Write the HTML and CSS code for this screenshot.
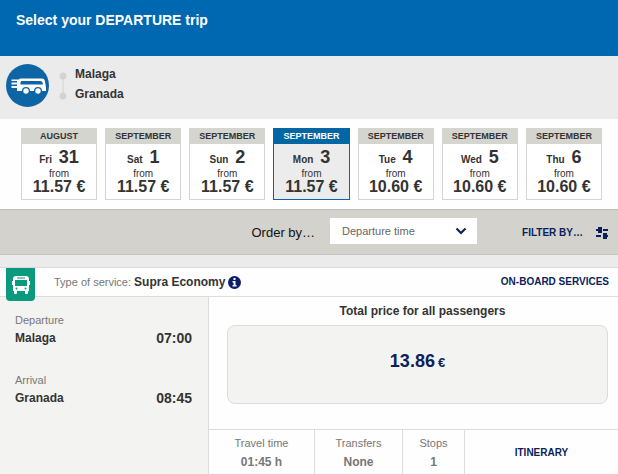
FILE: index.html
```html
<!DOCTYPE html>
<html lang="en">
<head>
    <meta charset="UTF-8">
    <meta name="viewport" content="width=device-width, initial-scale=1.0">
    <title>Select your departure trip</title>
    <link rel="stylesheet" href="styles.css">
</head>
<body>

    <header class="page-header">
        <h1>Select your DEPARTURE trip</h1>
    </header>

    <!-- Origin and destination -->
    <section class="route">
        <svg class="route-logo" viewBox="0 0 43 43" aria-hidden="true">
            <circle cx="21.500" cy="21.500" r="21.500" fill="#0d65a5"/>
            <path d="M15 14.500H36q2.500 0 3 3l1 6v3.500h-4a4 4 0 0 0-8 0h-4a4 4 0 0 0-8 0H11v-3H5.500v-2H11v-1.500H5.500v-2H11v-1.500H5.500v-1.500H13q0-1 2-1z" fill="#fff"/>
            <path d="M15.500 17h19q1.500 0 2 1.500l.5 2H14.500V18z" fill="#0d65a5"/>
            <circle cx="20" cy="27" r="2.700" fill="#fff"/>
            <circle cx="32" cy="27" r="2.700" fill="#fff"/>
        </svg>
        <svg class="route-line" viewBox="0 0 8 30" aria-hidden="true">
            <path d="M4 4v22" stroke="#d3d3d3" stroke-width="1"/>
            <circle cx="4" cy="5" r="3.500" fill="#d3d3d3"/>
            <circle cx="4" cy="25" r="3.500" fill="#d3d3d3"/>
        </svg>
        <div class="route-cities">
            <span>Malaga</span>
            <span>Granada</span>
        </div>
    </section>

    <!-- Days -->
    <nav class="days">
        <button class="day"><span class="month">AUGUST</span><span class="date">Fri <b>31</b></span><span class="from">from</span><span class="fare">11.57 €</span></button>
        <button class="day"><span class="month">SEPTEMBER</span><span class="date">Sat <b>1</b></span><span class="from">from</span><span class="fare">11.57 €</span></button>
        <button class="day"><span class="month">SEPTEMBER</span><span class="date">Sun <b>2</b></span><span class="from">from</span><span class="fare">11.57 €</span></button>
        <button class="day active"><span class="month">SEPTEMBER</span><span class="date">Mon <b>3</b></span><span class="from">from</span><span class="fare">11.57 €</span></button>
        <button class="day"><span class="month">SEPTEMBER</span><span class="date">Tue <b>4</b></span><span class="from">from</span><span class="fare">10.60 €</span></button>
        <button class="day"><span class="month">SEPTEMBER</span><span class="date">Wed <b>5</b></span><span class="from">from</span><span class="fare">10.60 €</span></button>
        <button class="day"><span class="month">SEPTEMBER</span><span class="date">Thu <b>6</b></span><span class="from">from</span><span class="fare">10.60 €</span></button>
    </nav>

    <!-- Order and filter -->
    <div class="toolbar">
        <label for="order">Order by…</label>
        <div class="select-box">
            <select id="order">
                <option>Departure time</option>
                <option>Arrival time</option>
                <option>Price</option>
            </select>
            <svg class="chevron" viewBox="0 0 12 8" aria-hidden="true">
                <path d="M1.500 1.500L6 6l4.500-4.500" fill="none" stroke="#14234f" stroke-width="2.200"/>
            </svg>
        </div>
        <button class="filter">
            FILTER BY…
            <svg viewBox="0 0 14 14" aria-hidden="true">
                <path d="M1 4h6M8 4h5M1 10h5M8 10h5" stroke="#0b1f5c" stroke-width="2"/>
                <path d="M3 1h4v6H3zM8 7h4v6H8z" fill="#0b1f5c"/>
            </svg>
        </button>
    </div>

    <!-- Result -->
    <article class="trip">
        <div class="trip-head">
            <span class="bus-badge">
                <svg viewBox="0 0 18 18" aria-hidden="true">
                    <path d="M4 0h10q3 0 3 3v2h1v4h-1v6h-1v2q0 1-1 1h-1q-1 0-1-1v-2H5v2q0 1-1 1H3q-1 0-1-1v-2H1V9H0V5h1V3q0-3 3-3z" fill="#fff"/>
                    <path d="M5 1.500h8v1H5zM3 4h12v6H3z" fill="#0c9a7f"/>
                    <circle cx="4.500" cy="12.500" r="1" fill="#0c9a7f"/>
                    <circle cx="13.500" cy="12.500" r="1" fill="#0c9a7f"/>
                </svg>
            </span>
            <p class="service">Type of service: <b>Supra Economy</b></p>
            <button class="info" aria-label="Service information">
                <svg viewBox="0 0 13 13" aria-hidden="true">
                    <circle cx="6.500" cy="6.500" r="6.500" fill="#0b1f6b"/>
                    <path d="M5.500 2h2v2h-2zM4.500 5h3v4h1v1.500h-4V9h1V6.500h-1z" fill="#fff"/>
                </svg>
            </button>
            <a class="onboard" href="#services">ON-BOARD SERVICES</a>
        </div>

        <div class="trip-body">
            <div class="times">
                <div class="stop">
                    <span class="stop-label">Departure</span>
                    <span class="stop-city">Malaga</span>
                    <time>07:00</time>
                </div>
                <div class="stop">
                    <span class="stop-label">Arrival</span>
                    <span class="stop-city">Granada</span>
                    <time>08:45</time>
                </div>
            </div>

            <div class="details">
                <div class="price">
                    <h2>Total price for all passengers</h2>
                    <button class="price-box"><b>13.86</b><span>€</span></button>
                </div>
                <div class="facts">
                    <div class="fact"><span>Travel time</span><b>01:45 h</b></div>
                    <div class="fact"><span>Transfers</span><b>None</b></div>
                    <div class="fact"><span>Stops</span><b>1</b></div>
                    <a class="itinerary" href="#itinerary">ITINERARY</a>
                </div>
            </div>
        </div>
    </article>

</body>
</html>
```
FILE: styles.css
```css
* {
    box-sizing: border-box;
}

body {
    margin: 0;
    background-color: #ebebeb;
    color: #333;
    font-family: "Liberation Sans", Arial, sans-serif;
    font-size: 12px;
    line-height: 16px;
}

button {
    margin: 0;
    padding: 0;
    border: none;
    background: none;
    color: inherit;
    font: inherit;
    cursor: pointer;
}

svg {
    display: block;
}

/* Header */
.page-header {
    padding: 12px 16px 28px;
    background-color: #0067b1;
    color: #fff;
}

.page-header h1 {
    margin: 0;
    font-size: 14px;
    line-height: 16px;
}

/* Route */
.route {
    display: flex;
    align-items: center;
    padding: 8px 6px 12px;
}

.route-logo {
    width: 43px;
    height: 43px;
}

.route-line {
    width: 8px;
    height: 30px;
    margin: 0 8px 0 10px;
}

.route-cities {
    display: flex;
    flex-direction: column;
    gap: 4px;
    padding-bottom: 3px;
    font-size: 12px;
    font-weight: bold;
}

/* Days */
.days {
    display: grid;
    grid-template-columns: repeat(7, 1fr);
    gap: 8px;
    padding: 9px 16px 9px 21px;
    background-color: #fefefe;
}

.day {
    display: flex;
    flex-direction: column;
    align-items: stretch;
    padding-bottom: 4px;
    border: 1px solid #d5d5d0;
    background-color: #fff;
    text-align: center;
}

.month {
    background-color: #d5d5d0;
    font-size: 9px;
    font-weight: bold;
    line-height: 15px;
}

.date {
    padding-top: 4px;
    font-size: 10px;
    font-weight: bold;
    line-height: 18px;
}

.date b {
    margin-left: 4px;
    font-size: 18px;
}

.from {
    font-size: 10px;
    line-height: 9px;
}

.fare {
    font-size: 16px;
    font-weight: bold;
    line-height: 17px;
}

.day.active {
    border-color: #0d659f;
    background-color: #ececec;
}

.day.active .month {
    background-color: #0067a5;
    color: #fff;
}

/* Order and filter */
.toolbar {
    display: flex;
    justify-content: flex-end;
    align-items: center;
    padding: 8px 9px 10px;
    border-top: 1px solid #bfbdb9;
    border-bottom: 1px solid #c5c4c0;
    background-color: #d3d2cd;
}

.toolbar label,
.filter {
    padding-top: 4px;
}

.toolbar label {
    color: #111;
    font-size: 13px;
}

.select-box {
    display: grid;
    align-items: center;
    width: 147px;
    margin: 0 45px 0 15px;
}

.select-box select,
.select-box .chevron {
    grid-area: 1 / 1;
}

.select-box select {
    width: 100%;
    height: 26px;
    padding: 0 12px;
    border: none;
    background-color: #fff;
    color: #666;
    font: inherit;
    font-size: 11px;
    appearance: none;
}

.chevron {
    justify-self: end;
    width: 12px;
    height: 8px;
    margin-right: 10px;
    pointer-events: none;
}

.filter {
    display: flex;
    align-items: center;
    gap: 12px;
    color: #0b1f5c;
    font-size: 10px;
    font-weight: bold;
}

.filter svg {
    width: 14px;
    height: 14px;
}

/* Result */
.trip {
    margin-top: 12px;
    border-top: 1px solid #d9d9d9;
    background-color: #fefefe;
}

.trip-head {
    display: flex;
    align-items: center;
    height: 29px;
    padding: 0 9px 0 6px;
    border-bottom: 1px solid #dcdcdc;
}

.bus-badge {
    display: grid;
    place-items: center;
    align-self: flex-start;
    flex: none;
    z-index: 1;
    width: 29px;
    height: 33px;
    margin-right: 19px;
    border-radius: 0 0 4px 4px;
    background-color: #0c9a7f;
}

.bus-badge svg {
    width: 18px;
    height: 18px;
}

.service {
    margin: 0;
    color: #777;
    font-size: 11px;
}

.service b {
    color: #333;
    font-size: 12px;
}

.info {
    margin-left: 3px;
}

.info svg {
    width: 13px;
    height: 13px;
}

.onboard,
.itinerary {
    color: #0b1f5c;
    font-size: 10px;
    font-weight: bold;
    text-decoration: none;
}

.onboard {
    margin-left: auto;
}

.trip-body {
    display: grid;
    grid-template-columns: 209px 1fr;
}

.times {
    display: flex;
    flex-direction: column;
    gap: 26px;
    padding: 15px 16px 0 15px;
    border-right: 1px solid #dcdcdc;
    background-color: #f3f3f1;
}

.stop {
    display: grid;
    grid-template-columns: 1fr auto;
    row-gap: 2px;
}

.stop-label {
    grid-column: 1 / -1;
    color: #777;
    font-size: 11px;
}

.stop-city {
    font-weight: bold;
}

.stop time {
    font-size: 14px;
    font-weight: bold;
}

.price {
    padding: 6px 10px 25px 18px;
    text-align: center;
}

.price h2 {
    margin: 0 0 6px;
    padding-left: 10px;
    font-size: 12px;
    line-height: 16px;
}

.price-box {
    display: flex;
    justify-content: center;
    align-items: baseline;
    gap: 3px;
    width: 100%;
    padding: 26px 0 31px;
    border: 1px solid #dcdcdc;
    border-radius: 8px;
    background-color: #f3f3f1;
    color: #0b1f5c;
    font-size: 18px;
    line-height: 18px;
}

.price-box span {
    font-size: 13px;
    font-weight: bold;
}

.facts {
    display: grid;
    grid-template-columns: 106px 88px 62px 1fr;
    border-top: 1px solid #dcdcdc;
}

.fact {
    display: flex;
    flex-direction: column;
    gap: 3px;
    padding: 5px 0;
    border-right: 1px solid #dcdcdc;
    color: #777;
    text-align: center;
}

.fact span {
    font-size: 11px;
}

.itinerary {
    align-self: center;
    text-align: center;
}
```
